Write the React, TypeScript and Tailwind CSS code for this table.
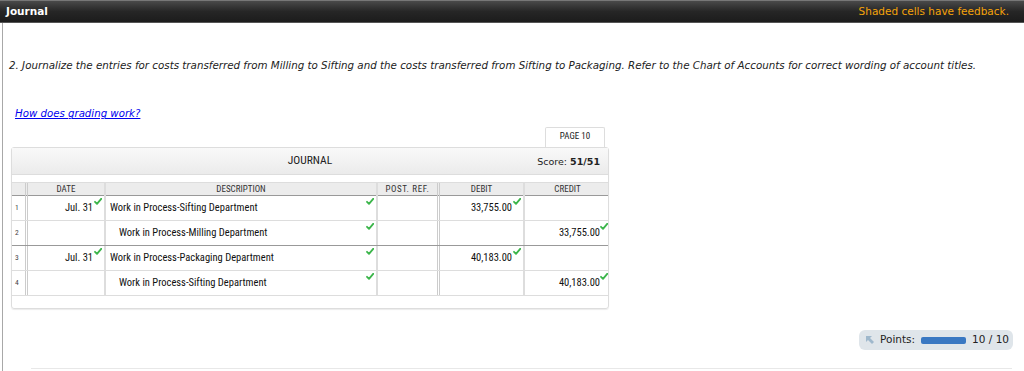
import React from 'react';

const narrow = { fontFamily: '"Liberation Sans Narrow", "Roboto Condensed", "Liberation Sans", sans-serif' };

const Check = () => (
  <svg className="absolute top-[2px] right-[2px] w-[8px] h-[7px]" viewBox="0 0 8 7">
    <path d="M1 3.8 L3 5.8 L7.2 0.8" fill="none" stroke="#3bb54a" strokeWidth="1.8" strokeLinecap="round" strokeLinejoin="round" />
  </svg>
);

interface Row {
  n: number;
  date?: string;
  desc: string;
  indent?: boolean;
  debit?: string;
  credit?: string;
  dark?: boolean;
}

const rows: Row[] = [
  { n: 1, date: 'Jul. 31', desc: 'Work in Process-Sifting Department', debit: '33,755.00' },
  { n: 2, desc: 'Work in Process-Milling Department', indent: true, credit: '33,755.00', dark: true },
  { n: 3, date: 'Jul. 31', desc: 'Work in Process-Packaging Department', debit: '40,183.00' },
  { n: 4, desc: 'Work in Process-Sifting Department', indent: true, credit: '40,183.00' },
];

const cols = 'grid grid-cols-[16px_78px_272px_62px_85px_85px]';

export default function App() {
  return (
    <div className="w-[1024px] h-[371px] bg-white overflow-hidden" style={{ fontFamily: '"DejaVu Sans", Verdana, sans-serif' }}>
      <div className="h-[23px] flex items-center justify-between px-[6px] bg-gradient-to-b from-[#4a4a4a] via-[#262626] to-[#1c1c1c] border-t border-[#777] border-b border-b-[#555]">
        <span className="text-white text-[10.5px] font-bold">Journal</span>
        <span className="text-[#f5a30a] text-[10.5px] pr-[9px]">Shaded cells have feedback.</span>
      </div>
      <div className="ml-[2px] border-l border-[#a8a8a8] h-[348px] relative">
        <p className="pt-[35px] pl-[6px] text-[10.3px] italic text-[#222]">
          2. Journalize the entries for costs transferred from Milling to Sifting and the costs transferred from Sifting to Packaging. Refer to the Chart of Accounts for correct wording of account titles.
        </p>
        <a className="block mt-[33px] ml-[12px] text-[10.2px] italic text-[#0000ee] underline w-fit">How does grading work?</a>
        <div className="ml-[8px] mt-[5px] w-[598px]">
          <div className="flex justify-end pr-[4px]">
            <div className="w-[60px] h-[20px] border border-b-0 border-[#ddd] rounded-t-[2px] flex items-center justify-center text-[9px] text-[#222]" style={narrow}>PAGE 10</div>
          </div>
          <div className="border border-[#ddd] rounded-[3px] shadow-[0_1px_1px_rgba(0,0,0,0.08)]">
            <div className="h-[27px] bg-gradient-to-b from-[#f9f9f9] to-[#ebebeb] border-b border-[#ddd] relative flex items-center justify-center">
              <span className="text-[11.5px] text-[#222]" style={narrow}>JOURNAL</span>
              <span className="absolute right-[8px] top-[7px] text-[9.5px] text-[#222]">Score: <b>51/51</b></span>
            </div>
            <div className="h-[7px]" />
            <div className={`${cols} h-[14px] bg-[#ececec] border-y border-t-[#ddd] border-b-[#999] text-[9px] text-[#333]`} style={narrow}>
              <div className="border-r-[3px] border-double border-[#ccc]" />
              <div className="border-r-2 border-[#ddd] flex items-center justify-center">DATE</div>
              <div className="border-r-2 border-[#ddd] flex items-center justify-center">DESCRIPTION</div>
              <div className="border-r-[3px] border-double border-[#ccc] flex items-center justify-center tracking-[0.6px]">POST. REF.</div>
              <div className="border-r-2 border-[#ddd] flex items-center justify-center">DEBIT</div>
              <div className="flex items-center justify-center">CREDIT</div>
            </div>
            {rows.map((r) => (
              <div key={r.n} className={`${cols} h-[25px] border-b ${r.dark ? 'border-[#999]' : 'border-[#ddd]'} text-[10.5px] text-[#111]`} style={narrow}>
                <div className="border-r-[3px] border-double border-[#ccc] flex items-center pl-[3px] text-[7.5px] text-[#444]">{r.n}</div>
                <div className="border-r-2 border-[#ddd] relative flex items-center justify-end pr-[11px] pt-[1px]">
                  {r.date}
                  {r.date && <Check />}
                </div>
                <div className={`border-r-2 border-[#ddd] relative flex items-center pt-[1px] ${r.indent ? 'pl-[13px]' : 'pl-[4px]'}`}>
                  {r.desc}
                  <Check />
                </div>
                <div className="border-r-[3px] border-double border-[#ccc]" />
                <div className="border-r-2 border-[#ddd] relative flex items-center justify-end pr-[11px] pt-[1px]">
                  {r.debit}
                  {r.debit && <Check />}
                </div>
                <div className="relative flex items-center justify-end pr-[10px] pt-[1px]">
                  {r.credit}
                  {r.credit && <Check />}
                </div>
              </div>
            ))}
            <div className="h-[12px]" />
          </div>
        </div>
        <div className="absolute left-[856px] top-[307px] w-[154px] h-[20px] rounded-[6px] bg-[#dfe5ea] flex items-center pl-[6px] text-[10.5px] text-[#222]">
          <svg className="w-[10px] h-[10px] mr-[5px]" viewBox="0 0 10 10">
            <path d="M1 1 H7 L5 3 L9 7 L7 9 L3 5 L1 7 Z" fill="#9fb8cc" />
          </svg>
          <span>Points:</span>
          <div className="w-[45px] h-[7px] ml-[6px] rounded-[2px] bg-[#3a78c2]" />
          <span className="ml-[6px]">10 / 10</span>
        </div>
        <div className="absolute left-[28px] right-[12px] top-[345px] border-t border-[#e8e8e8]" />
      </div>
    </div>
  );
}
